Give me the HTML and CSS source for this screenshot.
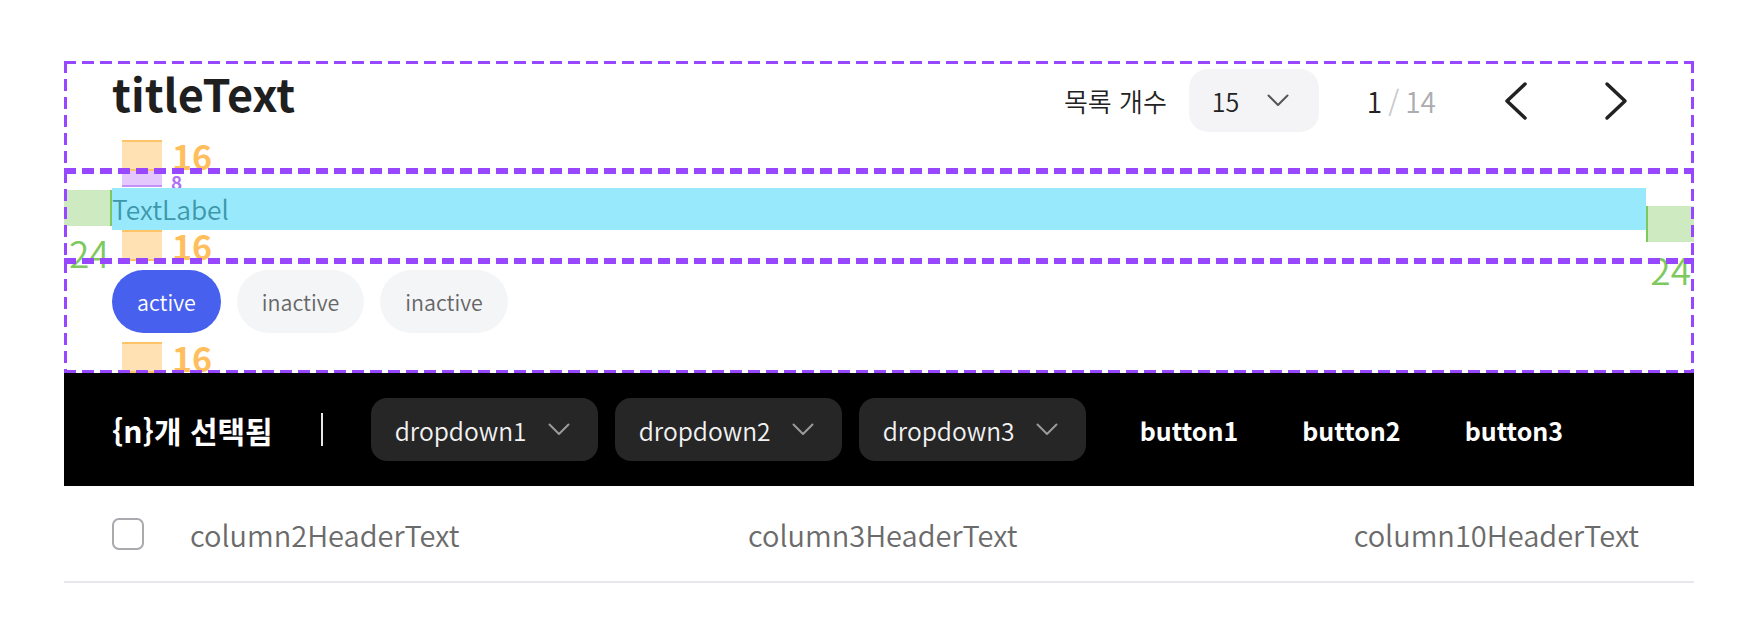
FILE: index.html
```html
<!DOCTYPE html>
<html lang="ko">
<head>
<meta charset="utf-8">
<title>Table header</title>
<link rel="stylesheet" href="styles.css">
</head>
<body>
<div class="page">
  <section class="sec sec-head">
    <div class="head-row">
      <h1 class="title">titleText</h1>
      <div class="controls">
        <span class="ctl-label">목록 개수</span>
        <div class="select">
          <span class="select-value">15</span>
          <svg class="chev-sm" width="22" height="13" viewBox="0 0 22 13"><polyline points="1.5,1.5 11,11 20.5,1.5" fill="none" stroke="#555" stroke-width="2" stroke-linecap="round" stroke-linejoin="round"/></svg>
        </div>
        <div class="pager"><span class="cur">1</span><span class="sep">/</span><span class="total">14</span></div>
        <button class="icon-btn" type="button"><svg width="60" height="60" viewBox="0 0 60 60"><polyline points="39,13 21,30 39,47" fill="none" stroke="#222" stroke-width="3.5" stroke-linecap="round" stroke-linejoin="round"/></svg></button>
        <button class="icon-btn" type="button"><svg width="60" height="60" viewBox="0 0 60 60"><polyline points="21,13 39,30 21,47" fill="none" stroke="#222" stroke-width="3.5" stroke-linecap="round" stroke-linejoin="round"/></svg></button>
      </div>
    </div>
    <div class="spacer sp-orange"><span class="sp-box"></span><span class="sp-label">16</span></div>
  </section>

  <section class="sec sec-label">
    <div class="spacer sp-purple"><span class="sp-box"></span><span class="sp-label">8</span></div>
    <div class="label-row">
      <span class="pad-green pad-left"></span>
      <span class="text-label">TextLabel</span>
      <span class="pad-green pad-right"></span>
    </div>
    <div class="spacer sp-orange"><span class="sp-box"></span><span class="sp-label">16</span></div>
    <span class="pad-num pad-num-left">24</span>
    <span class="pad-num pad-num-right">24</span>
  </section>

  <section class="sec sec-chips">
    <div class="chips">
      <span class="chip chip-active">active</span>
      <span class="chip">inactive</span>
      <span class="chip">inactive</span>
    </div>
    <div class="spacer sp-orange"><span class="sp-box"></span><span class="sp-label">16</span></div>
  </section>

  <div class="action-bar">
    <span class="selected-count">{n}개 선택됨</span>
    <span class="bar-divider"></span>
    <div class="dropdowns">
      <div class="dropdown"><span>dropdown1</span><svg width="22" height="13" viewBox="0 0 22 13"><polyline points="1.5,1.5 11,11 20.5,1.5" fill="none" stroke="#9a9a9a" stroke-width="2" stroke-linecap="round" stroke-linejoin="round"/></svg></div>
      <div class="dropdown"><span>dropdown2</span><svg width="22" height="13" viewBox="0 0 22 13"><polyline points="1.5,1.5 11,11 20.5,1.5" fill="none" stroke="#9a9a9a" stroke-width="2" stroke-linecap="round" stroke-linejoin="round"/></svg></div>
      <div class="dropdown"><span>dropdown3</span><svg width="22" height="13" viewBox="0 0 22 13"><polyline points="1.5,1.5 11,11 20.5,1.5" fill="none" stroke="#9a9a9a" stroke-width="2" stroke-linecap="round" stroke-linejoin="round"/></svg></div>
    </div>
    <div class="bar-buttons">
      <button class="bar-btn" type="button">button1</button>
      <button class="bar-btn" type="button">button2</button>
      <button class="bar-btn" type="button">button3</button>
    </div>
  </div>

  <div class="table-head">
    <span class="checkbox"></span>
    <span class="th">column2HeaderText</span>
    <span class="th">column3HeaderText</span>
    <span class="th th-right">column10HeaderText</span>
  </div>
</div>
</body>
</html>
```

FILE: styles.css
```css
html, body {
  margin: 0;
  padding: 0;
  background: #ffffff;
}

.page {
  margin: 61px 0 0 64px;
  width: 1630px;
  font-family: "Noto Sans CJK KR", "Noto Sans", sans-serif;
  color: #222;
}

.sec {
  position: relative;
  box-sizing: border-box;
}

.sec::after {
  content: "";
  position: absolute;
  inset: 0;
  pointer-events: none;
  background:
    repeating-linear-gradient(to right, #9747ff 0 12px, transparent 12px 18px) left top / 100% 3px no-repeat,
    repeating-linear-gradient(to right, #9747ff 0 12px, transparent 12px 18px) left bottom / 100% 3px no-repeat,
    repeating-linear-gradient(to bottom, #9747ff 0 12px, transparent 12px 18px) left top / 3px 100% no-repeat,
    repeating-linear-gradient(to bottom, #9747ff 0 12px, transparent 12px 18px) right top / 3px 100% no-repeat;
}

/* ---------- section 1 ---------- */
.sec-head {
  height: 110px;
  padding: 0 48px;
}

.head-row {
  height: 79px;
  display: flex;
  justify-content: space-between;
}

.title {
  margin: 0;
  font-size: 45px;
  font-weight: 700;
  line-height: 63px;
  color: #1f1f1f;
  align-self: flex-start;
}

.controls {
  display: flex;
  align-items: center;
  height: 79px;
}

.ctl-label {
  font-size: 26px;
  font-weight: 350;
  line-height: 40px;
  color: #222;
}

.select {
  margin-left: 22px;
  width: 130px;
  height: 63px;
  box-sizing: border-box;
  padding: 0 30px 0 23px;
  border-radius: 19px;
  background: #f4f4f6;
  display: flex;
  align-items: center;
  justify-content: space-between;
}

.select-value {
  font-size: 25px;
  font-weight: 350;
  line-height: 40px;
  color: #222;
}

.chev-sm {
  display: block;
}

.pager {
  margin-left: 48px;
  font-size: 28px;
  font-weight: 350;
  line-height: 40px;
  display: flex;
  align-items: center;
}

.pager .cur { color: #222; }
.pager .sep { color: #c8c8cc; margin: 0 6px; }
.pager .total { color: #acacb1; }

.icon-btn {
  width: 60px;
  height: 60px;
  padding: 0;
  border: 0;
  background: transparent;
  margin-left: 50px;
  display: block;
}

.icon-btn + .icon-btn {
  margin-left: 40px;
}

.icon-btn svg { display: block; }

/* ---------- spacer annotations ---------- */
.spacer {
  display: flex;
  align-items: center;
  margin-left: 10px;
}

.sp-box {
  width: 40px;
  box-sizing: border-box;
}

.sp-orange .sp-box {
  height: 31px;
  background: #ffe1b4;
  border-top: 2px solid #ffc467;
  border-bottom: 2px solid #ffc467;
}

.sp-orange {
  height: 31px;
}

.sp-orange .sp-label {
  margin-left: 10px;
  font-size: 34px;
  font-weight: 700;
  line-height: 31px;
  color: #ffbf5e;
}

.sp-purple {
  height: 16px;
  align-items: flex-start;
}

.sp-purple .sp-box {
  height: 16px;
  background: #e4c8fd;
  border-bottom: 2px solid #c391f8;
}

.sp-purple .sp-label {
  margin-left: 9px;
  font-size: 19px;
  font-weight: 700;
  line-height: 16px;
  height: 16px;
  color: #b16ef8;
  padding-top: 3px;
}

/* ---------- section 2 ---------- */
.sec-label {
  height: 90px;
}

.sec-label .spacer {
  margin-left: 58px;
}

.label-row {
  margin-top: 1px;
  height: 42px;
  display: flex;
  align-items: flex-start;
}

.pad-green {
  height: 36px;
  box-sizing: border-box;
  background: #cdeac1;
  flex: none;
}

.pad-left {
  width: 48px;
  margin-top: 2px;
  border-right: 2px solid #7ec95f;
}

.pad-right {
  width: 48px;
  margin-top: 18px;
  border-left: 2px solid #7ec95f;
}

.text-label {
  flex: 1;
  height: 42px;
  background: #99e9fd;
  font-size: 26.4px;
  font-weight: 350;
  line-height: 42px;
  color: #3e97aa;
}

.pad-num {
  position: absolute;
  font-size: 37px;
  font-weight: 350;
  line-height: 38px;
  color: #7dc95e;
}

.pad-num-left {
  left: 5px;
  top: 62px;
}

.pad-num-right {
  right: 3px;
  top: 79px;
}

/* ---------- section 3 ---------- */
.sec-chips {
  height: 112px;
  padding: 9px 48px 0;
}

.sec-chips .spacer {
  margin-top: 9px;
}

.chips {
  display: flex;
  gap: 16px;
}

.chip {
  height: 63px;
  padding: 0 25px;
  border-radius: 32px;
  background: #f4f5f7;
  color: #666;
  font-size: 21.4px;
  font-weight: 350;
  line-height: 63px;
}

.chip-active {
  background: #4760ee;
  color: #fff;
}

/* ---------- action bar ---------- */
.action-bar {
  height: 113px;
  background: #000;
  display: flex;
  align-items: center;
  padding-left: 48px;
}

.selected-count {
  color: #fff;
  font-size: 30px;
  font-weight: 700;
  line-height: 40px;
}

.bar-divider {
  width: 2px;
  height: 33px;
  background: #e6e6e6;
  margin: 0 48px 0 48px;
}

.dropdowns {
  display: flex;
  gap: 17px;
}

.dropdown {
  width: 227px;
  height: 63px;
  box-sizing: border-box;
  padding: 0 28px 0 24px;
  border-radius: 16px;
  background: #262626;
  display: flex;
  align-items: center;
  justify-content: space-between;
  color: #f2f2f2;
  font-size: 24.6px;
  font-weight: 350;
  line-height: 40px;
}

.dropdown svg { display: block; }

.bar-buttons {
  display: flex;
  margin-left: 22px;
}

.bar-btn {
  padding: 0 32px;
  border: 0;
  background: transparent;
  color: #fff;
  font-family: inherit;
  font-size: 25px;
  font-weight: 700;
  line-height: 40px;
}

/* ---------- table header ---------- */
.table-head {
  height: 95px;
  border-bottom: 2px solid #e8e8ec;
  display: grid;
  grid-template-columns: 78px 558px 1fr auto;
  align-items: center;
  padding: 0 55px 0 48px;
}

.checkbox {
  width: 32px;
  height: 32px;
  box-sizing: border-box;
  border: 2px solid #a9a9ae;
  border-radius: 7px;
  background: #fff;
}

.th {
  font-size: 29px;
  font-weight: 350;
  line-height: 40px;
  color: #6b6b6b;
}

.th-right {
  text-align: right;
}
```
